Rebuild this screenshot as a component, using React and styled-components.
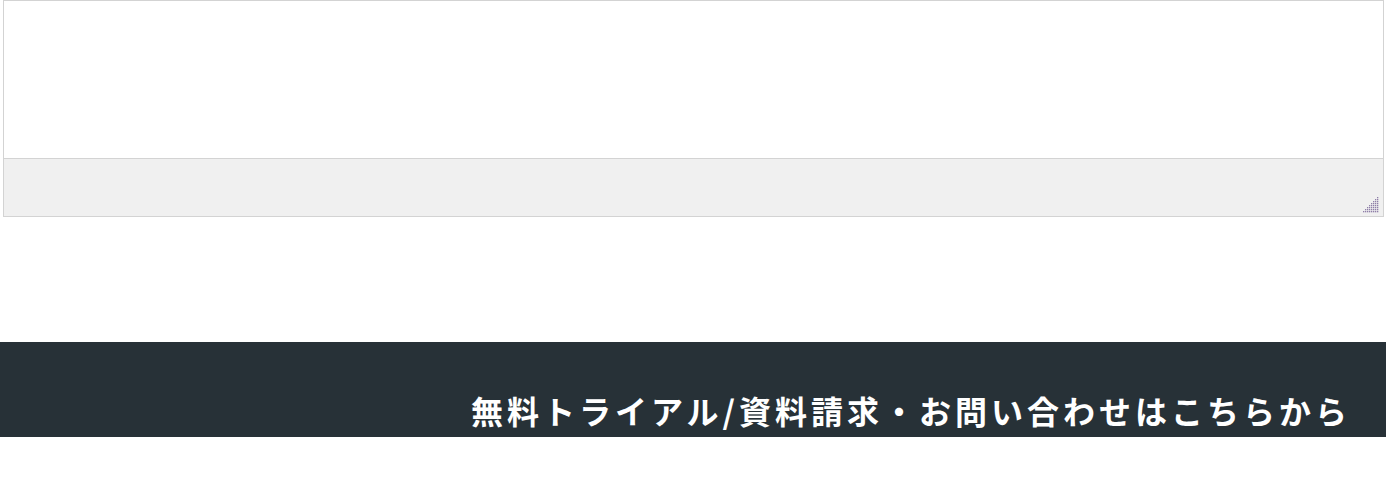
import React from "react";
import styled, { createGlobalStyle } from "styled-components";

const GlobalStyle = createGlobalStyle`
  html, body {
    margin: 0;
    padding: 0;
    background: #ffffff;
  }
  body {
    font-family: "Noto Sans CJK JP", "Noto Sans", sans-serif;
  }
`;

const Page = styled.div`
  width: 1390px;
  display: flex;
  flex-direction: column;
`;

const EditorFrame = styled.div`
  margin-left: 3px;
  width: 1379px;
  border: 1px solid #d3d3d3;
  display: flex;
  flex-direction: column;
`;

const EditorBody = styled.div`
  height: 157px;
  background: #ffffff;
`;

const StatusBar = styled.div`
  height: 58px;
  border-top: 1px solid #d3d3d3;
  background: #f0f0f0;
  display: flex;
  justify-content: flex-end;
  align-items: flex-end;
  padding: 0 4px 3px 0;
  box-sizing: border-box;
`;

const Grip = styled.svg`
  display: block;
  width: 16px;
  height: 16px;
`;

const Spacer = styled.div`
  height: 125px;
`;

const CtaBar = styled.div`
  width: 1386px;
  height: 95px;
  background: #273137;
  box-sizing: border-box;
  padding: 48px 35px 0 0;
  display: flex;
  justify-content: flex-end;
`;

const CtaText = styled.span`
  color: #ffffff;
  font-family: "Noto Sans CJK JP", "Noto Sans", sans-serif;
  font-weight: 700;
  font-size: 32px;
  line-height: 40px;
  letter-spacing: 4px;
  white-space: nowrap;
`;

function ResizeGrip() {
  const dots = [];
  for (let r = 0; r < 8; r++) {
    for (let c = 0; c < 8; c++) {
      if (c >= 7 - r) {
        dots.push(
          <rect key={`${r}-${c}`} x={c * 2} y={r * 2} width="1.3" height="1.3" fill="#8f7fa8" />
        );
      }
    }
  }
  return (
    <Grip viewBox="0 0 16 16" aria-hidden="true">
      {dots}
    </Grip>
  );
}

export default function App() {
  return (
    <>
      <GlobalStyle />
      <Page>
        <EditorFrame>
          <EditorBody />
          <StatusBar>
            <ResizeGrip />
          </StatusBar>
        </EditorFrame>
        <Spacer />
        <CtaBar>
          <CtaText>無料トライアル/資料請求・お問い合わせはこちらから</CtaText>
        </CtaBar>
      </Page>
    </>
  );
}
